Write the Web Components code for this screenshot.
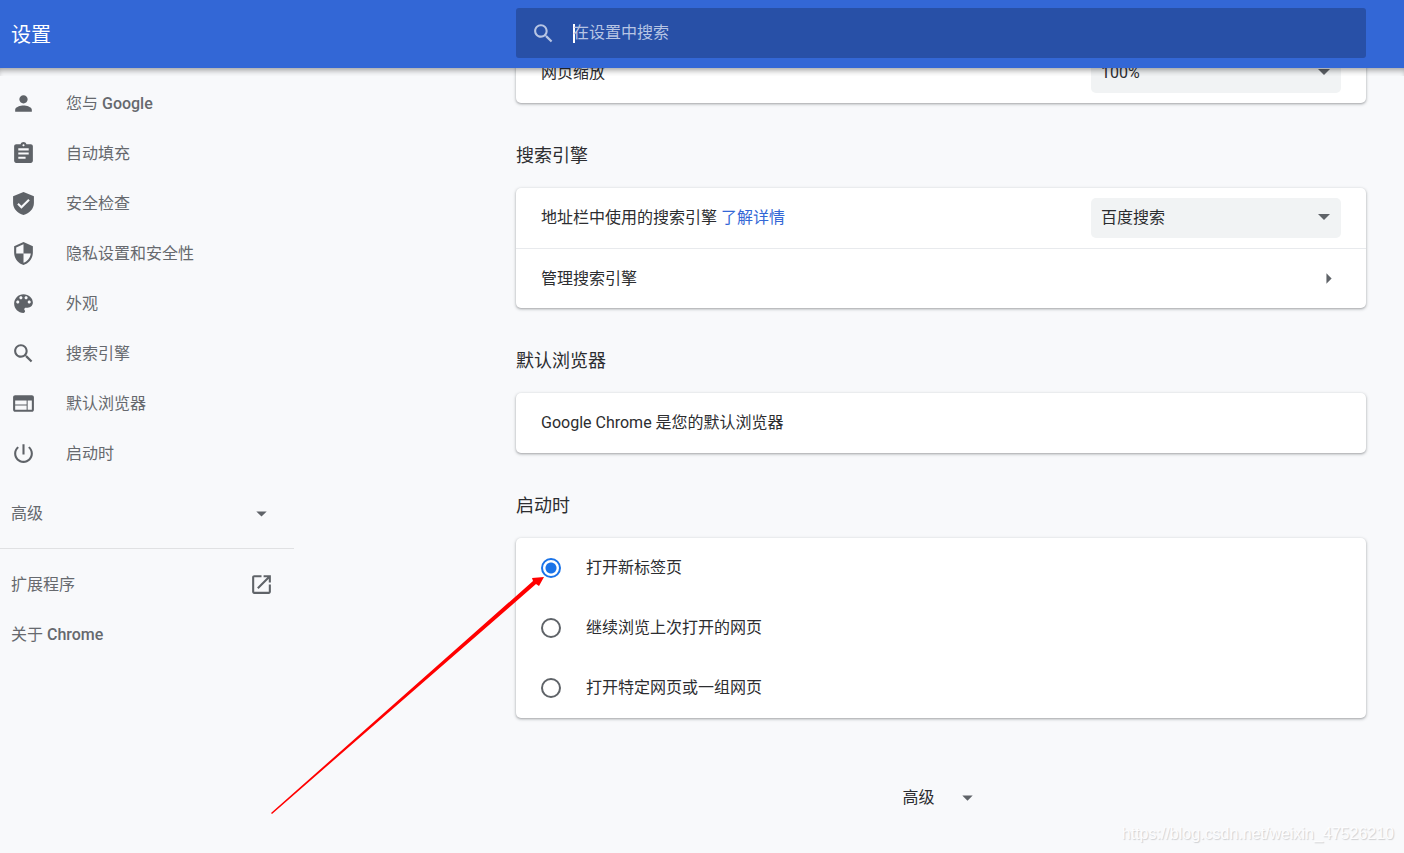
<!DOCTYPE html>
<html lang="zh-CN">
<head>
<meta charset="utf-8">
<title>设置</title>
<style>
  html, body { height: 100%; }
  body {
    margin: 0;
    background: #f8f9fb;
    color: #2c2d30;
    font: 16px/24px Roboto, "Noto Sans CJK SC", sans-serif;
    --columns: minmax(294px, 1fr) minmax(0, 850px) 38px;
    --icon: #5f6368;
    --accent: #3367d6;
  }
</style>
</head>
<body>
<settings-app></settings-app>

<script>
const define = (name, html, setup) => {
  const template = document.createElement('template');
  template.innerHTML = html;
  customElements.define(name, class extends HTMLElement {
    constructor() {
      super();
      this.attachShadow({ mode: 'open' }).append(template.content.cloneNode(true));
    }
    connectedCallback() {
      if (setup) setup(this, this.shadowRoot);
    }
  });
};

const icons = {
  person: 'M12 12c2.21 0 4-1.79 4-4s-1.79-4-4-4-4 1.79-4 4 1.79 4 4 4zm0 2c-2.67 0-8 1.34-8 4v2h16v-2c0-2.66-5.33-4-8-4z',
  assignment: 'M19 3h-4.18C14.4 1.84 13.3 1 12 1c-1.3 0-2.4.84-2.82 2H5c-1.1 0-2 .9-2 2v14c0 1.1.9 2 2 2h14c1.1 0 2-.9 2-2V5c0-1.1-.9-2-2-2zm-7 0c.55 0 1 .45 1 1s-.45 1-1 1-1-.45-1-1 .45-1 1-1zm2 14H7v-2h7v2zm3-4H7v-2h10v2zm0-4H7V7h10v2z',
  verified: 'M12 1L2 5v6.500c0 5.600 4.300 10 10 11.500 5.700-1.500 10-5.900 10-11.500V5L12 1zm-2 16l-4-4 1.410-1.410L10 14.170l6.590-6.590L18 9l-8 8z',
  security: 'M12 1L3 5v6c0 5.550 3.840 10.740 9 12 5.160-1.260 9-6.450 9-12V5l-9-4zm0 10.990h7c-.53 4.120-3.280 7.790-7 8.940V12H5V6.300l7-3.110v8.800z',
  palette: 'M12 3c-4.970 0-9 4.030-9 9s4.030 9 9 9c.83 0 1.500-.67 1.500-1.500 0-.39-.15-.74-.39-1.010-.23-.26-.38-.61-.38-.99 0-.83.67-1.500 1.500-1.500H16c2.760 0 5-2.240 5-5 0-4.420-4.030-8-9-8zm-5.500 9c-.83 0-1.500-.67-1.500-1.500S5.670 9 6.500 9 8 9.670 8 10.500 7.330 12 6.500 12zm3-4C8.670 8 8 7.330 8 6.500S8.670 5 9.500 5s1.500.67 1.500 1.500S10.330 8 9.500 8zm5 0c-.83 0-1.500-.67-1.500-1.500S13.670 5 14.500 5s1.500.67 1.500 1.500S15.330 8 14.500 8zm3 4c-.83 0-1.500-.67-1.500-1.500S16.670 9 17.500 9s1.500.67 1.500 1.500-.67 1.500-1.500 1.500z',
  search: 'M15.500 14h-.79l-.28-.27C15.410 12.590 16 11.110 16 9.500 16 5.910 13.090 3 9.500 3S3 5.910 3 9.500 5.910 16 9.500 16c1.610 0 3.090-.59 4.230-1.570l.27.28v.79l5 4.990L20.490 19l-4.990-5zm-6 0C7.010 14 5 11.990 5 9.500S7.010 5 9.500 5 14 7.010 14 9.500 11.990 14 9.500 14z',
  browser: 'M20 4H4c-1.100 0-1.990.9-1.990 2L2 18c0 1.100.9 2 2 2h16c1.100 0 2-.9 2-2V6c0-1.100-.9-2-2-2zm-5 14H4v-4h11v4zm0-5H4V9h11v4zm5 5h-4V9h4v9z',
  power: 'M13 3h-2v10h2V3zm4.830 2.170l-1.420 1.420C17.990 7.860 19 9.810 19 12c0 3.870-3.130 7-7 7s-7-3.130-7-7c0-2.190 1.010-4.140 2.580-5.420L6.170 5.170C4.230 6.820 3 9.260 3 12c0 4.970 4.030 9 9 9s9-4.030 9-9c0-2.740-1.230-5.180-3.170-6.830z',
  launch: 'M19 19H5V5h7V3H5c-1.110 0-2 .9-2 2v14c0 1.100.89 2 2 2h14c1.100 0 2-.9 2-2v-7h-2v7zM14 3v2h3.590l-9.830 9.830 1.410 1.410L19 6.410V10h2V3h-7z',
  down: 'M7 10l5 5 5-5z',
  right: 'M10 17l5-5-5-5z'
};

define('settings-icon', `
  <style>
    :host { display: block; flex: none; width: 25px; height: 25px; color: var(--icon); }
    svg { display: block; width: 100%; height: 100%; fill: currentColor; }
  </style>
  <svg viewBox="0 0 24 24" aria-hidden="true"><path/></svg>
`, (host, root) => root.querySelector('path').setAttribute('d', icons[host.getAttribute('name')]));

define('settings-search', `
  <style>
    :host { display: block; color: #fff; }
    label { display: flex; align-items: center; height: 50px; padding: 0 15px; border-radius: 3px; background: #2850a7; }
    settings-icon { color: #b7c5e4; margin-right: 17px; }
    .caret { width: 2px; height: 19px; margin-right: -2px; background: #fff; }
    input { flex: 1; min-width: 0; padding: 0; border: 0; outline: 0; background: none; color: inherit; font: inherit; }
    input::placeholder { color: #b7c5e4; opacity: 1; }
  </style>
  <label>
    <settings-icon name="search"></settings-icon>
    <span class="caret"></span>
    <input type="text" placeholder="在设置中搜索" aria-label="在设置中搜索">
  </label>
`);

define('settings-toolbar', `
  <style>
    :host { display: block; position: relative; z-index: 2; background: var(--accent); color: #fff; }
    header { display: grid; grid-template-columns: var(--columns); align-items: center; padding: 8px 0 10px; }
    h1 { margin: 0; padding: 4px 0 0 11px; font-size: 20px; line-height: 28px; font-weight: 400; }
    .shadow { position: absolute; top: 100%; left: 0; right: 0; height: 8px; box-shadow: inset 0 5px 6px -3px rgba(0,0,0,.4); pointer-events: none; }
  </style>
  <header>
    <h1>设置</h1>
    <settings-search></settings-search>
  </header>
  <div class="shadow"></div>
`);

define('menu-item', `
  <style>
    :host { display: block; color: #66696e; }
    a { display: flex; align-items: center; height: 50px; padding: 0 20px 0 11px; color: inherit; text-decoration: none; }
    settings-icon.lead { margin-right: 30px; }
    span { flex: 1; padding-top: 2px; }
    ::slotted(b) { font-weight: 500; }
  </style>
  <a href="#"><span><slot></slot></span></a>
`, (host, root) => {
  const link = root.querySelector('a');
  for (const side of ['lead', 'trail']) {
    if (!host.hasAttribute(side)) continue;
    const icon = document.createElement('settings-icon');
    icon.className = side;
    icon.setAttribute('name', host.getAttribute(side));
    side === 'lead' ? link.prepend(icon) : link.append(icon);
  }
});

define('settings-menu', `
  <style>
    :host { display: block; width: 294px; padding-top: 10px; }
    .advanced { margin-top: 10px; }
    hr { height: 1px; margin: 10px 0; border: 0; background: #e0e1e3; }
  </style>
  <nav>
    <menu-item lead="person">您与 <b>Google</b></menu-item>
    <menu-item lead="assignment">自动填充</menu-item>
    <menu-item lead="verified">安全检查</menu-item>
    <menu-item lead="security">隐私设置和安全性</menu-item>
    <menu-item lead="palette">外观</menu-item>
    <menu-item lead="search">搜索引擎</menu-item>
    <menu-item lead="browser">默认浏览器</menu-item>
    <menu-item lead="power">启动时</menu-item>
    <menu-item class="advanced" trail="down">高级</menu-item>
    <hr>
    <menu-item trail="launch">扩展程序</menu-item>
    <menu-item>关于 <b>Chrome</b></menu-item>
  </nav>
`);

define('settings-section', `
  <style>
    :host { display: block; }
    h2 { margin: 0; padding: 40px 0 20px; font-size: 18px; line-height: 25px; font-weight: 400; }
    h2:empty { display: none; }
    .card { position: relative; border-radius: 5px; background: #fff; box-shadow: 0 1px 2px rgba(60,64,67,.3), 0 1px 3px 1px rgba(60,64,67,.15); }
  </style>
  <section><h2></h2><div class="card"><slot></slot></div></section>
`, (host, root) => { root.querySelector('h2').textContent = host.getAttribute('heading') || ''; });

define('settings-row', `
  <style>
    :host { display: flex; align-items: center; justify-content: space-between; box-sizing: border-box; height: 60px; padding: 0 25px; }
    :host([divided]) { border-top: 1px solid #e8eaed; }
    ::slotted(a) { color: var(--accent); text-decoration: none; }
  </style>
  <div><slot></slot></div>
  <slot name="control"></slot>
`);

define('settings-select', `
  <style>
    :host { display: block; position: relative; width: 250px; }
    select { appearance: none; display: block; width: 100%; height: 40px; padding: 0 30px 0 10px; border: 0; border-radius: 5px; background: #f1f3f4; color: inherit; font: inherit; }
    svg { position: absolute; right: 11px; top: 16px; width: 12px; height: 6px; fill: var(--icon); pointer-events: none; }
  </style>
  <select><option></option></select>
  <svg viewBox="0 0 12 6" aria-hidden="true"><path d="M0 0h12L6 6z"/></svg>
`, (host, root) => {
  root.querySelector('option').textContent = host.getAttribute('value');
  root.querySelector('select').setAttribute('aria-label', host.getAttribute('label'));
});

define('startup-options', `
  <style>
    :host { display: block; }
    label { display: flex; align-items: center; height: 60px; padding: 0 25px; }
    input { appearance: none; flex: none; box-sizing: border-box; width: 20px; height: 20px; margin: 0 25px 0 0; border: 2px solid var(--icon); border-radius: 50%; }
    input:checked { border-color: #1a73e8; background: radial-gradient(circle, #1a73e8 5px, transparent 6px); }
  </style>
  <label><input type="radio" name="startup" checked>打开新标签页</label>
  <label><input type="radio" name="startup">继续浏览上次打开的网页</label>
  <label><input type="radio" name="startup">打开特定网页或一组网页</label>
`);

define('pointer-arrow', `
  <style>
    :host { display: block; position: absolute; left: -245px; top: 38px; width: 274px; height: 239px; pointer-events: none; }
    svg { display: block; width: 100%; height: 100%; fill: #f00; }
  </style>
  <svg viewBox="0 0 274 239" aria-hidden="true">
    <path d="M273 1L268 10L265 8L1 238L0 237L262 5L261 2Z"/>
  </svg>
`);

define('advanced-toggle', `
  <style>
    :host { display: flex; justify-content: center; padding-top: 54px; }
    button { display: flex; align-items: center; gap: 20px; height: 50px; padding: 0; border: 0; background: none; color: inherit; font: inherit; }
    span { padding-top: 2px; }
  </style>
  <button type="button"><span>高级</span><settings-icon name="down"></settings-icon></button>
`);

define('settings-page', `
  <style>
    :host { display: block; margin-top: -25px; }
  </style>
  <main>
    <settings-section>
      <settings-row>网页缩放<settings-select slot="control" label="网页缩放" value="100%"></settings-select></settings-row>
    </settings-section>
    <settings-section heading="搜索引擎">
      <settings-row>地址栏中使用的搜索引擎 <a href="#">了解详情</a><settings-select slot="control" label="搜索引擎" value="百度搜索"></settings-select></settings-row>
      <settings-row divided>管理搜索引擎<settings-icon slot="control" name="right"></settings-icon></settings-row>
    </settings-section>
    <settings-section heading="默认浏览器">
      <settings-row>Google Chrome 是您的默认浏览器</settings-row>
    </settings-section>
    <settings-section heading="启动时">
      <startup-options></startup-options>
      <pointer-arrow></pointer-arrow>
    </settings-section>
    <advanced-toggle></advanced-toggle>
  </main>
`);

define('settings-app', `
  <style>
    :host { display: flex; flex-direction: column; position: relative; height: 100vh; overflow: hidden; }
    .content { flex: 1; min-height: 0; display: grid; grid-template-columns: var(--columns); align-items: start; }
    .watermark { position: absolute; right: 10px; bottom: 7px; font-family: "Liberation Sans", sans-serif; color: #fdfdfe; text-shadow: 1px 1px 1px #cfd0d2; }
  </style>
  <settings-toolbar></settings-toolbar>
  <div class="content">
    <settings-menu></settings-menu>
    <settings-page></settings-page>
  </div>
  <div class="watermark">https://blog.csdn.net/weixin_47526210</div>
`);
</script>
</body>
</html>
